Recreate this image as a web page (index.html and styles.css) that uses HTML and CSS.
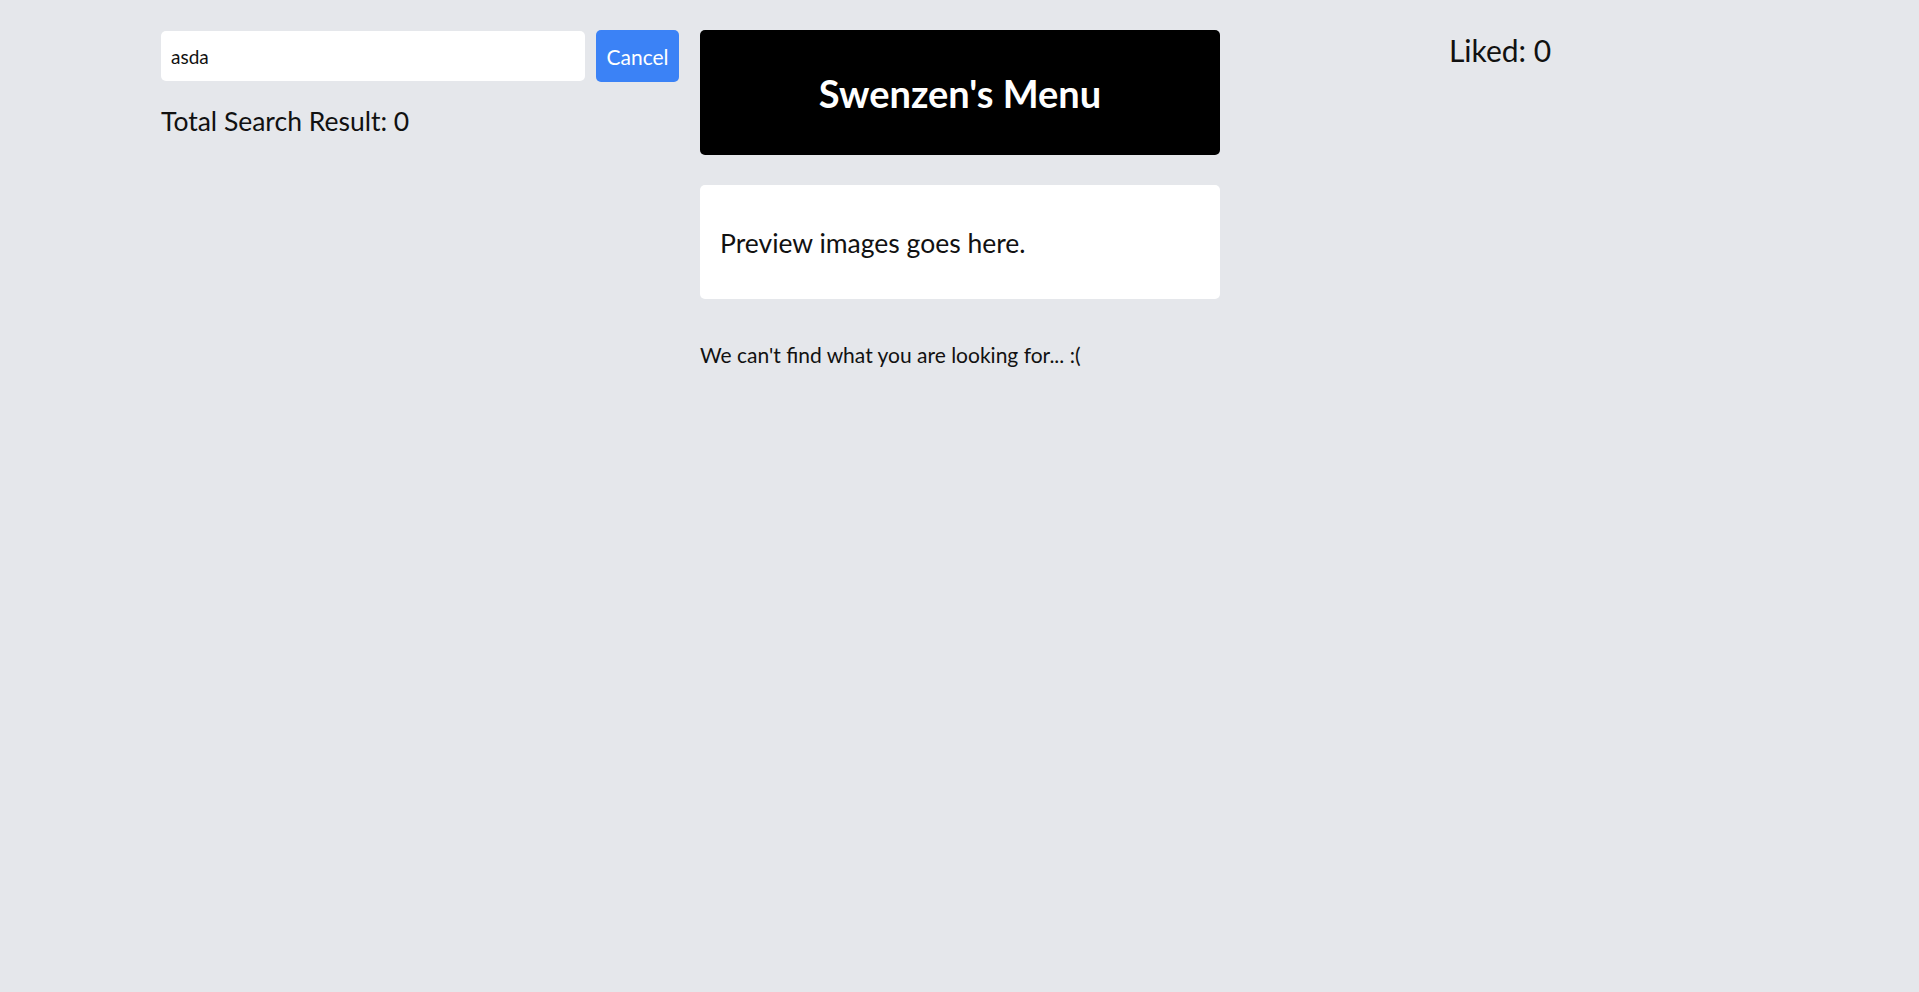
FILE: index.html
```html
<!DOCTYPE html>
<html lang="en">
<head>
<meta charset="utf-8">
<title>Swenzen's Menu</title>
<link rel="stylesheet" href="styles.css">
</head>
<body>
<div class="page">
  <section class="col-left">
    <div class="search">
      <input class="search-input" type="text" value="asda">
      <button class="cancel-btn">Cancel</button>
    </div>
    <p class="total">Total Search Result: 0</p>
  </section>
  <section class="col-mid">
    <header class="brand"><h1>Swenzen's Menu</h1></header>
    <div class="preview"><p>Preview images goes here.</p></div>
    <p class="empty">We can't find what you are looking for... :(</p>
  </section>
  <section class="col-right">
    <p class="liked">Liked: 0</p>
  </section>
</div>
</body>
</html>
```

FILE: styles.css
```css
html, body {
  margin: 0;
  background: #e5e7eb;
}
body {
  font-family: Lato, "Noto Sans", sans-serif;
  color: #111;
}
.page {
  display: grid;
  grid-template-columns: 519px 520px 520px;
  column-gap: 20px;
  padding: 30px 0 0 161px;
  align-items: start;
}
.search {
  display: flex;
  align-items: center;
  gap: 11px;
  height: 52px;
}
.search-input {
  width: 424px;
  height: 50px;
  box-sizing: border-box;
  border: none;
  border-radius: 5px;
  background: #fff;
  padding: 0 10px;
  font-family: inherit;
  font-size: 19px;
  color: #111;
  outline: none;
}
.cancel-btn {
  height: 52px;
  width: 83px;
  border: none;
  border-radius: 5px;
  background: #3b82f6;
  color: #fff;
  font-family: inherit;
  font-size: 21px;
  padding: 0;
}
.total {
  margin: 22px 0 0;
  font-size: 26.5px;
  line-height: 34px;
}
.brand {
  height: 125px;
  background: #000;
  border-radius: 5px;
  display: flex;
  align-items: center;
  justify-content: center;
}
.brand h1 {
  margin: 0;
  color: #fff;
  font-size: 38px;
  font-weight: 700;
}
.preview {
  margin-top: 30px;
  height: 114px;
  background: #fff;
  border-radius: 5px;
  display: flex;
  align-items: center;
  padding: 2px 20px 0;
  box-sizing: border-box;
}
.preview p {
  margin: 0;
  font-size: 26.5px;
  line-height: 34px;
}
.empty {
  margin: 42px 0 0;
  font-size: 21px;
  line-height: 28px;
}
.liked {
  margin: 4px 0 0;
  text-align: center;
  font-size: 30px;
  line-height: 32px;
}
```
